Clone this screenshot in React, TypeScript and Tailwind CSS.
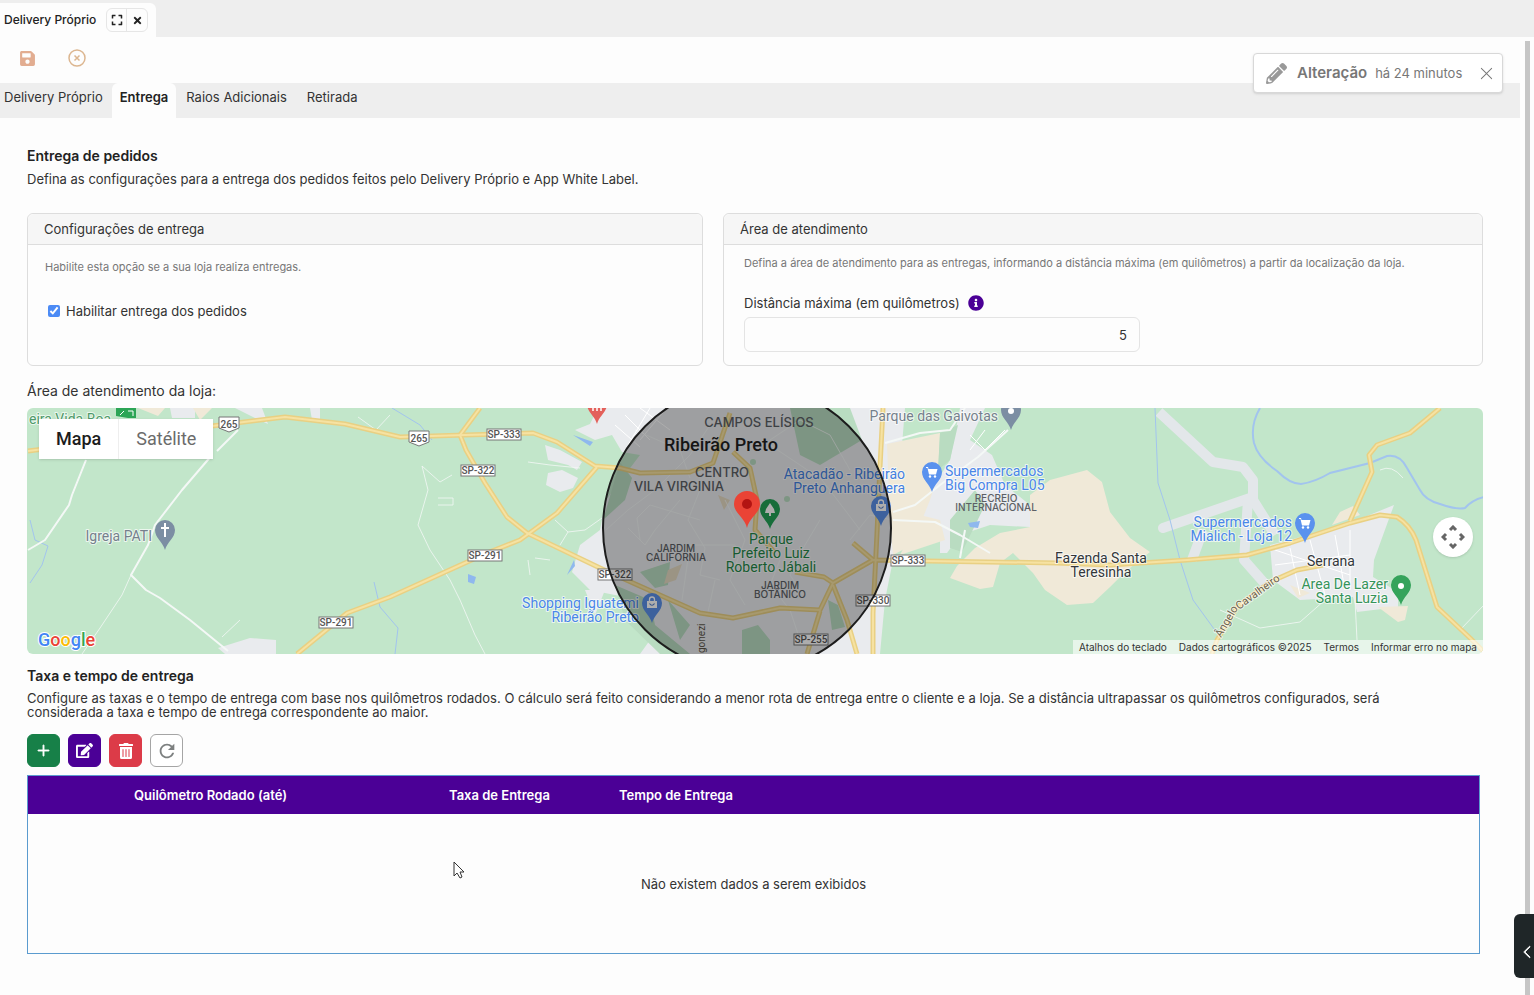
import { useState } from "react";
import { FaSave, FaExpand, FaTimes, FaPencilAlt, FaInfoCircle, FaEdit, FaTrashAlt } from "react-icons/fa";
import { BsXLg, BsPlusLg, BsChevronLeft } from "react-icons/bs";
import { MdRefresh } from "react-icons/md";

const tabs = [
  { label: "Delivery Próprio", className: "pl-1 pr-[9px]" },
  { label: "Entrega", className: "px-2" },
  { label: "Raios Adicionais", className: "px-[10px]" },
  { label: "Retirada", className: "px-[10px]" },
];

// Highways are drawn twice: a darker casing and a lighter centre line
const highways = [
  "M28 451L60 447L212 426L285 417L345 424L400 437L465 435L533 433L557 442L595 466L620 468L640 473L690 472L713 463L730 413",
  "M480 408L460 435L466 450L485 483L507 517L527 533L600 568L633 583L700 613L733 618L780 608L820 610L833 583L873 560L927 561L1057 563L1110 565L1187 560L1247 555L1290 543L1350 523L1380 515L1397 517Q1410 525 1416 540L1437 607L1470 638L1484 652",
  "M297 654L347 613L390 597L487 553L520 540L557 513L597 467",
  "M883 408L880 467L877 533L873 613L873 654",
  "M833 585L847 620L857 654",
  "M820 611L807 654",
  "M833 583L824 577L795 572",
  "M733 452L750 468L757 500L755 530L775 553",
  "M853 543L873 560",
  "M1350 521L1372 472L1369 455L1377 445L1410 433L1440 408",
  "M1323 565L1297 570L1270 582L1237 607L1217 640L1212 654",
];

const streets = [
  "M86 460L72 495L69 505L45 540L28 550",
  "M212 455L182 490L155 525L148 545L131 575L146 590L160 598L190 620L228 651",
  "M217 451L238 430",
  "M885 443L920 433L950 430L965 408",
  "M893 512L915 505L940 485L978 457L1008 430",
  "M893 520L935 522L960 535L990 553",
  "M965 530L960 558",
];

const localStreets = [
  "M131 575L122 595L100 628L82 654",
  "M222 637L240 620",
  "M422 466L428 490L418 525L430 550L450 580L460 600L475 635L485 654",
  "M422 466L440 482L452 475M438 498L453 498L453 505L438 505",
  "M528 462L550 465L580 468M555 520L568 532L585 530L602 518M560 545L568 532",
  "M528 560L530 575M535 558L550 560",
  "M358 417L376 430L390 415",
  "M606 530L628 510L655 490L690 455L710 425",
  "M628 528L645 545L655 530L680 500",
  "M640 540L637 518L650 505L700 520",
  "M700 490L688 520L705 548L700 575L720 580",
  "M682 600L690 545L735 545L742 560",
  "M715 580L708 612",
  "M770 445L800 465L822 480L845 510L860 530",
  "M820 520L805 545L790 575L800 590",
  "M850 540L870 515L892 520",
  "M770 440L800 420L830 435L850 470",
  "M725 500L745 540L730 580L745 605",
  "M635 430L680 450L690 478",
  "M780 560L770 585L790 610L800 640",
  "M1220 610L1260 628L1300 622L1325 600",
  "M1355 600L1357 640M1460 630L1484 605",
  "M1380 470Q1392 464 1403 478",
];

const shields = [
  { label: "SP-333", x: 504, y: 435 },
  { label: "SP-322", x: 478, y: 471 },
  { label: "SP-291", x: 485, y: 556 },
  { label: "SP-322", x: 615, y: 575 },
  { label: "SP-291", x: 336, y: 623 },
  { label: "SP-333", x: 908, y: 561 },
  { label: "SP-330", x: 873, y: 601 },
  { label: "SP-255", x: 811, y: 640 },
];

const toolButtons = [
  { label: "Adicionar", icon: BsPlusLg, className: "bg-[#178048] border-[#178048] text-white", size: 15 },
  { label: "Editar", icon: FaEdit, className: "bg-[#4b0096] border-[#4b0096] text-white", size: 17 },
  { label: "Excluir", icon: FaTrashAlt, className: "bg-[#dc3b48] border-[#dc3b48] text-white", size: 16 },
  { label: "Atualizar", icon: MdRefresh, className: "bg-white border-[#a5a5a5] text-[#7d8080]", size: 22 },
];

function Pin({ x, y, color, children }: { x: number; y: number; color: string; children?: React.ReactNode }) {
  // x / y is the tip of the pin
  return (
    <g transform={`translate(${x} ${y})`}>
      <path d="M0 0C-2 -8 -10 -12 -10 -20A10 10 0 0 1 10 -20C10 -12 2 -8 0 0Z" fill={color} />
      {children}
    </g>
  );
}

function CartGlyph() {
  return (
    <g fill="#fff">
      <path d="M-6 -25H-4L-3.500 -23H5.500L4 -17.500H-3L-4.500 -24H-6Z" />
      <circle cx="-2" cy="-15.500" r="1.200" />
      <circle cx="3" cy="-15.500" r="1.200" />
    </g>
  );
}

function BagGlyph() {
  return (
    <g fill="none" stroke="#fff">
      <path d="M-2.500 -22V-23.500A2.500 2.500 0 0 1 2.500 -23.500V-22" strokeWidth="1.300" />
      <rect x="-5" y="-22" width="10" height="7" fill="#fff" stroke="none" />
      <path d="M-2.500 -19.500Q0 -16 2.500 -19.500" stroke="#4a78c8" strokeWidth="1.200" />
    </g>
  );
}

function Poi({ lines, x, y, color, anchor = "end", size = 14 }: {
  lines: string[]; x: number; y: number; color: string; anchor?: "start" | "middle" | "end"; size?: number;
}) {
  return (
    <text x={x} y={y} fill={color} fontSize={size} textAnchor={anchor} stroke="#fff" strokeOpacity="0.7" strokeWidth="2" paintOrder="stroke" strokeLinejoin="round">
      {lines.map((line, i) => (
        <tspan key={line} x={x} y={y + i * 14}>{line}</tspan>
      ))}
    </text>
  );
}

function District({ lines, x, y, size }: { lines: string[]; x: number; y: number; size: number }) {
  return (
    <text fill="#5c6065" fontSize={size} textAnchor="middle" fontWeight="500" fontFamily="Inter, sans-serif">
      {lines.map((line, i) => (
        <tspan key={line} x={x} y={y + i * 9}>{line}</tspan>
      ))}
    </text>
  );
}

function MapDrawing() {
  return (
    <svg viewBox="27 408 1456 246" preserveAspectRatio="xMidYMid slice" className="block w-full h-full" fontFamily="Roboto, sans-serif">
      <rect x="27" y="408" width="1457" height="246" fill="#c2e6ca" />

      {/* Urban areas */}
      <g fill="#e9ebee">
        <path d="M575 430L590 424L598 408H905L900 470L893 560L885 600L880 654H640L650 640L640 600L590 590L572 572L580 545L600 530L606 500L640 455L622 452L612 435L595 440Z" />
        <path d="M545 445L560 450L582 462L577 470L568 465L548 460Z" />
        <path d="M548 473L562 470L578 478L573 488L560 492L546 485Z" />
        <path d="M960 408H985L970 440L992 455L1005 485L1030 505L1030 527L990 525L960 535L947 553L940 553V535L920 545L905 525L890 520L925 500L950 460Z" />
        <path d="M1270 545L1290 540L1350 523L1394 505L1374 560L1373 577L1398 592V607L1357 612L1353 597L1300 600L1273 580Z" />
        <path d="M218 648L250 638L276 640V654H225Z" />
        <path d="M585 590H605L595 615Z" />
        <path d="M170 408H195V418H172ZM235 408H262L268 424L255 418ZM310 408H320V420H312Z" />
      </g>
      <g stroke="#e3e7ea" strokeWidth="10" fill="none" strokeLinejoin="round">
        <path d="M1159 412L1213 462L1243 467L1253 480V500L1275 535" />
        <path d="M1163 528L1250 498" strokeLinecap="round" />
        <path d="M1248 500L1244 560L1266 585M1203 530L1192 560" />
      </g>

      {/* Farmland */}
      <g fill="#f0e9d8">
        <path d="M887 444L940 433L938 475L930 500L912 545L893 555L890 520Z" />
        <path d="M920 515L940 520L945 540L900 555Z" />
        <path d="M957 566L975 548L1000 533L1030 527V495L1050 480L1087 470L1102 482L1110 512L1130 538L1150 552L1125 572L1110 587L1093 603L1067 605L1045 590L1033 573L1013 553L1000 563L993 587L980 589L950 578Z" />
        <path d="M1332 525L1340 512L1353 506L1360 515ZM1290 585L1310 593L1298 598ZM1378 607L1408 606L1405 620L1398 622Z" />
        <path d="M138 408H165L158 416ZM193 408H212L200 420Z" />
      </g>

      {/* Parks inside the city */}
      <g fill="#b9dcc1">
        <path d="M603 520L620 462L632 478L625 500Z" />
        <path d="M790 408H850L862 440L820 465L800 455Z" />
        <path d="M640 572L670 562L668 585L655 588ZM615 585L650 600L655 625L690 654H660L625 620Z" />
        <path d="M828 600L838 605L845 627L832 630ZM742 630L758 625L770 640V654H742ZM668 600L690 625L680 640Z" />
        <path d="M940 433L958 425L950 460L938 470ZM950 520L975 490L985 505L962 552L950 548Z" />
        <circle cx="753" cy="462" r="3" />
        <circle cx="787" cy="499" r="3" />
      </g>
      <path d="M668 570L682 564L676 580L664 584ZM718 495L730 500L724 510Z" fill="#e5dac3" />

      {/* Water */}
      <g fill="none" stroke="#a2c4ee">
        <path d="M1260 408Q1250 425 1254 443Q1258 458 1277 471Q1290 484 1301 484Q1315 482 1330 473L1370 463L1387 456Q1400 454 1407 468L1420 490Q1425 500 1440 504Q1457 510 1465 508Q1472 500 1484 497" strokeWidth="2" />
        <path d="M1155 408L1158 483L1170 520L1180 560L1193 600L1217 633" strokeWidth="1" />
        <path d="M30 520L35 540L48 546L42 565L30 583M374 582L380 607L398 628L395 654M392 408L420 425L432 440" strokeWidth="1" />
      </g>
      <path d="M573 435L593 442L590 446ZM468 574L476 577L474 584L468 582ZM567 575L574 560L575 566ZM968 523L980 521L978 528L970 527Z" fill="#8fb8ee" />

      {/* Streets */}
      <g fill="none" stroke="#f4f8f6" strokeLinejoin="round">
        {streets.map((d) => <path key={d} d={d} strokeWidth="2" />)}
        {localStreets.map((d) => <path key={d} d={d} strokeWidth="1" strokeOpacity="0.8" />)}
      </g>
      <g fill="none" stroke="#fff" strokeWidth="1">
        <path d="M640 408L670 430M625 415L650 440M615 425L640 447M650 408L628 445M665 410L640 440M1275 550L1350 575M1290 548L1300 595M1310 540L1325 595M1335 535L1345 590M1275 565L1350 555M1350 530V590M970 435L985 450L1005 430M985 430L970 450" />
      </g>

      {/* Highways */}
      <g fill="none" strokeLinejoin="round">
        {highways.map((d) => <path key={d} d={d} stroke="#e9d083" strokeWidth="5" />)}
        {highways.map((d) => <path key={d} d={d} stroke="#f6e2a2" strokeWidth="2" />)}
      </g>

      {/* Road signs */}
      {shields.map((s) => (
        <g key={`${s.label}-${s.x}`}>
          <rect x={s.x - 17} y={s.y - 6} width="34" height="11" fill="#fff" stroke="#777" />
          <text x={s.x} y={s.y + 3} fontSize="10" fontWeight="500" textAnchor="middle" fill="#555">{s.label}</text>
        </g>
      ))}
      {[{ x: 229, y: 424 }, { x: 419, y: 438 }].map((s) => (
        <g key={s.x}>
          <path d={`M${s.x - 10} ${s.y - 7}H${s.x + 10}V${s.y + 4}L${s.x} ${s.y + 8}L${s.x - 10} ${s.y + 4}Z`} fill="#fff" stroke="#777" />
          <text x={s.x} y={s.y + 4} fontSize="10" fontWeight="500" textAnchor="middle" fill="#555">265</text>
        </g>
      ))}

      {/* Places */}
      <Poi lines={["eira Vida Boa"]} x={111} y={424} color="#4f9a6a" />
      <path d="M116 408H136V418H128L116 416Z" fill="#2ca556" />
      <path d="M120 415L124 411M128 411H133V416" stroke="#fff" strokeWidth="1" fill="none" />
      <Poi lines={["Igreja PATI"]} x={152} y={541} color="#75808c" />
      <Pin x={165} y={550} color="#7c8ea3">
        <path d="M0 -27V-13M-4 -22H4" stroke="#fff" strokeWidth="2" />
      </Pin>
      <Pin x={597} y={424} color="#e3605a">
        <path d="M-4 -22V-13M0 -22V-13M4 -22V-13" stroke="#fff" strokeWidth="1.500" />
      </Pin>
      <Poi lines={["Parque das Gaivotas"]} x={998} y={421} color="#75808c" />
      <Pin x={1011} y={430} color="#7c8ea3">
        <circle cx="0" cy="-19" r="3" fill="#fff" />
      </Pin>
      <Poi lines={["Atacadão - Ribeirão", "Preto Anhanguera"]} x={905} y={479} color="#4380e0" />
      <Pin x={881} y={526} color="#5a8fe8"><BagGlyph /></Pin>
      <Poi lines={["Supermercados", "Big Compra L05"]} x={945} y={476} color="#4a86e8" anchor="start" />
      <Pin x={932} y={492} color="#5a92ee"><CartGlyph /></Pin>
      <Poi lines={["Shopping Iguatemi", "Ribeirão Preto"]} x={639} y={608} color="#4a86e8" />
      <Pin x={652} y={623} color="#5a8fe8"><BagGlyph /></Pin>
      <Poi lines={["Supermercados", "Mialich - Loja 12"]} x={1292} y={527} color="#4a86e8" />
      <Pin x={1305} y={543} color="#5a92ee"><CartGlyph /></Pin>
      <Poi lines={["Area De Lazer", "Santa Luzia"]} x={1388} y={589} color="#35945a" />
      <Pin x={1401} y={605} color="#35a35b">
        <circle cx="0" cy="-19" r="3" fill="#fff" />
      </Pin>
      <Poi lines={["Parque", "Prefeito Luiz", "Roberto Jábali"]} x={771} y={544} color="#1f8748" anchor="middle" />
      <Pin x={770} y={529} color="#22a156">
        <path d="M0 -26L4 -20L5 -16H1V-13H-1V-16H-5L-4 -20Z" fill="#fff" />
      </Pin>
      <Poi lines={["Fazenda Santa", "Teresinha"]} x={1101} y={563} color="#33373b" anchor="middle" />
      <Poi lines={["Serrana"]} x={1331} y={566} color="#33373b" anchor="middle" />
      <g fontSize="11" fill="#6b6350" stroke="#fff" strokeOpacity="0.6" strokeWidth="2" paintOrder="stroke">
        <text transform="translate(1221 638) rotate(-60)">Ângelo</text>
        <text transform="translate(1239 610) rotate(-36)">Cavalheiro</text>
      </g>
      <text transform="translate(705 653) rotate(-90)" fontSize="10" fill="#5e584c">gonezi</text>

      <District lines={["CAMPOS ELÍSIOS"]} x={759} y={427} size={13} />
      <District lines={["CENTRO"]} x={722} y={477} size={13} />
      <District lines={["VILA VIRGINIA"]} x={679} y={491} size={13} />
      <District lines={["JARDIM", "CALIFORNIA"]} x={676} y={552} size={10} />
      <District lines={["JARDIM", "BOTÂNICO"]} x={780} y={589} size={10} />
      <District lines={["RECREIO", "INTERNACIONAL"]} x={996} y={502} size={10} />
      <text x="721" y="451" fontSize="18" fontWeight="500" textAnchor="middle" fill="#1f1f1f">Ribeirão Preto</text>

      {/* Delivery radius and store */}
      <circle cx="747" cy="528" r="144" fill="#000" fillOpacity="0.32" stroke="#1c1c1c" strokeWidth="2" />
      <path d="M747 528C745 518 734 513 734 504A13 13 0 0 1 760 504C760 513 749 518 747 528Z" fill="#ea4335" />
      <circle cx="747" cy="504" r="5" fill="#b31412" />

      <text x="38" y="646" fontSize="18" fontWeight="500" stroke="#fff" strokeWidth="2" paintOrder="stroke">
        <tspan fill="#4285f4">G</tspan>
        <tspan fill="#ea4335">o</tspan>
        <tspan fill="#fbbc05">o</tspan>
        <tspan fill="#4285f4">g</tspan>
        <tspan fill="#34a853">l</tspan>
        <tspan fill="#ea4335">e</tspan>
      </text>
    </svg>
  );
}

function DeliveryMap() {
  return (
    <div className="relative h-[246px] mt-[7px] rounded-md overflow-hidden">
      <MapDrawing />

      <div className="absolute left-3 top-[11px] flex h-10 bg-white shadow text-lg font-[Roboto,sans-serif]">
        <button className="px-[17px] font-medium text-[#1c1c1c] border-r border-[#eeeeee]">Mapa</button>
        <button className="px-[17px] text-[#6b6b6b]">Satélite</button>
      </div>

      <button aria-label="Controles da câmera" className="absolute right-[10px] top-[109px] w-10 h-10 rounded-full bg-white shadow flex items-center justify-center">
        <svg viewBox="0 0 24 24" className="w-6 h-6" fill="none" stroke="#666" strokeWidth="3">
          <path d="M9 5L12 2L15 5M9 19L12 22L15 19M5 9L2 12L5 15M19 9L22 12L19 15" />
        </svg>
      </button>

      <div className="absolute right-0 bottom-0 flex h-[14px] leading-[14px] text-[10px] text-[#333] bg-white/60 font-[Inter,sans-serif]">
        <button className="px-[6px]">Atalhos do teclado</button>
        <span className="px-[6px]">Dados cartográficos ©2025</span>
        <a href="#termos" className="px-[6px]">Termos</a>
        <a href="#erro" className="px-[6px]">Informar erro no mapa</a>
      </div>
    </div>
  );
}

export default function App() {
  const [activeTab, setActiveTab] = useState("Entrega");
  const [enabled, setEnabled] = useState(true);
  const [distance, setDistance] = useState("5");
  const [showNotice, setShowNotice] = useState(true);

  return (
    <div className="relative min-h-screen flex flex-col bg-[#fdfdfd] text-[#333] text-[13px] leading-5 font-[Inter,sans-serif] overflow-hidden">
      {/* Window tabs */}
      <header className="h-[37px] pt-[3px] bg-[#eeeeee] flex">
        <div className="w-[156px] pl-1 bg-[#fdfdfd] rounded-tr-md flex items-center gap-[10px] text-[#222]">
          <span className="text-xs font-medium whitespace-nowrap">Delivery Próprio</span>
          <div className="flex h-6 rounded-md border border-[#e6e6e6]">
            <button aria-label="Expandir" className="w-5 flex items-center justify-center border-r border-[#e6e6e6]"><FaExpand size={12} /></button>
            <button aria-label="Fechar aba" className="w-5 flex items-center justify-center"><FaTimes size={11} /></button>
          </div>
        </div>
      </header>

      <div className="flex-1 flex">
        <main className="flex-1 min-w-0">
          <div className="h-[46px] pb-1 pl-[19px] flex items-center gap-8">
            <button aria-label="Salvar" className="text-[#e2ad91]"><FaSave size={17} /></button>
            <button aria-label="Cancelar" className="text-[#dcb690]">
              <svg viewBox="0 0 18 18" className="w-[18px] h-[18px]" fill="none" stroke="currentColor">
                <circle cx="9" cy="9" r="8" strokeWidth="1.500" />
                <path d="M6.500 6.500L11.500 11.500M11.500 6.500L6.500 11.500" strokeWidth="1.500" />
              </svg>
            </button>
          </div>

          <nav className="h-[35px] bg-[#eeeeee] flex">
            {tabs.map((tab) => (
              <button
                key={tab.label}
                onClick={() => setActiveTab(tab.label)}
                className={`pb-2 ${tab.className} ${activeTab === tab.label ? "bg-[#fdfdfd] rounded-t-md font-semibold text-[#222]" : ""}`}
              >
                {tab.label}
              </button>
            ))}
          </nav>

          <div className="pl-[27px] pr-[37px] pt-7 pb-10">
            <h2 className="text-sm font-semibold text-[#222]">Entrega de pedidos</h2>
            <p className="mt-[3px]">Defina as configurações para a entrega dos pedidos feitos pelo Delivery Próprio e App White Label.</p>

            <div className="mt-6 grid grid-cols-[676fr_760fr] gap-5">
              <section className="h-[153px] rounded-md border border-[#dddddd]">
                <h3 className="h-[31px] leading-[30px] px-4 bg-[#f6f6f6] border-b border-[#dddddd] rounded-t-md">Configurações de entrega</h3>
                <p className="px-[17px] pt-3 text-[11px] text-[#777]">Habilite esta opção se a sua loja realiza entregas.</p>
                <label className="mt-6 ml-5 flex items-center gap-[6px]">
                  <input type="checkbox" checked={enabled} onChange={(e) => setEnabled(e.target.checked)} className="w-3 h-3 accent-[#4c8bf5]" />
                  Habilitar entrega dos pedidos
                </label>
              </section>

              <section className="h-[153px] rounded-md border border-[#dddddd]">
                <h3 className="h-[31px] leading-[30px] px-4 bg-[#f6f6f6] border-b border-[#dddddd] rounded-t-md">Área de atendimento</h3>
                <p className="px-5 pt-2 text-[11px] text-[#777] whitespace-nowrap">
                  Defina a área de atendimento para as entregas, informando a distância máxima (em quilômetros) a partir da localização da loja.
                </p>
                <div className="mt-5 px-5">
                  <div className="flex items-center gap-2">
                    <label htmlFor="distance">Distância máxima (em quilômetros)</label>
                    <FaInfoCircle size={16} className="text-[#4b0096]" />
                  </div>
                  <input
                    id="distance"
                    value={distance}
                    onChange={(e) => setDistance(e.target.value)}
                    className="block mt-1 w-[396px] h-[35px] px-3 text-right rounded-md border border-[#e4e4e4] bg-[#fdfdfd]"
                  />
                </div>
              </section>
            </div>

            <p className="mt-[15px] text-sm leading-5">Área de atendimento da loja:</p>
            <DeliveryMap />

            <h2 className="mt-3 text-sm font-semibold text-[#222]">Taxa e tempo de entrega</h2>
            <p className="mt-[5px] pr-8 leading-[14px]">
              Configure as taxas e o tempo de entrega com base nos quilômetros rodados. O cálculo será feito considerando a menor rota de entrega entre o cliente e a loja. Se a distância ultrapassar os quilômetros configurados, será considerada a taxa e tempo de entrega correspondente ao maior.
            </p>

            <div className="mt-[15px] flex gap-2">
              {toolButtons.map(({ label, icon: Icon, className, size }) => (
                <button key={label} aria-label={label} className={`w-[33px] h-[33px] rounded-md border flex items-center justify-center ${className}`}>
                  <Icon size={size} strokeWidth={label === "Adicionar" ? 1 : 0} />
                </button>
              ))}
            </div>

            {/* Fees table */}
            <div className="mt-2 mr-[3px] border border-[#5b9bcf]">
              <table className="w-full table-fixed border-collapse">
                <thead>
                  <tr className="h-[38px] bg-[#4b0096] text-white text-left">
                    <td className="w-[98px]" />
                    <th className="w-[315px] px-2 font-semibold">Quilômetro Rodado (até)</th>
                    <th className="w-[170px] px-2 font-semibold">Taxa de Entrega</th>
                    <th className="px-2 font-semibold">Tempo de Entrega</th>
                  </tr>
                </thead>
                <tbody>
                  <tr className="h-[139px]">
                    <td colSpan={4} className="text-center">Não existem dados a serem exibidos</td>
                  </tr>
                </tbody>
              </table>
            </div>
          </div>
        </main>

        {/* Scrollbar */}
        <div className="w-[14px] pt-1 pl-[5px] flex">
          <div className="w-[5px] bg-[#c6c6c6]" />
        </div>
      </div>

      {showNotice && (
        <div className="absolute right-[31px] top-[53px] w-[250px] h-10 pl-3 pr-2 flex items-center bg-white rounded border border-[#d8d8d8] shadow-sm text-[#777]">
          <FaPencilAlt size={21} className="text-[#999]" />
          <strong className="ml-[10px] text-[15px] font-semibold">Alteração</strong>
          <span className="ml-2">há 24 minutos</span>
          <button aria-label="Fechar" className="ml-auto" onClick={() => setShowNotice(false)}><BsXLg size={15} /></button>
        </div>
      )}

      <button aria-label="Abrir painel" className="absolute right-0 bottom-[17px] w-5 h-16 pl-[6px] pt-3 rounded-l-md bg-[#1f2628] text-white flex items-center">
        <BsChevronLeft size={14} strokeWidth={1} />
      </button>

      {/* Mouse pointer */}
      <svg viewBox="0 0 12 18" className="absolute left-[453px] top-[861px] w-3 h-[18px]">
        <path d="M1 1V15L4 12L7 17L9 16L7 11H11Z" fill="#fff" stroke="#333" />
      </svg>
    </div>
  );
}
